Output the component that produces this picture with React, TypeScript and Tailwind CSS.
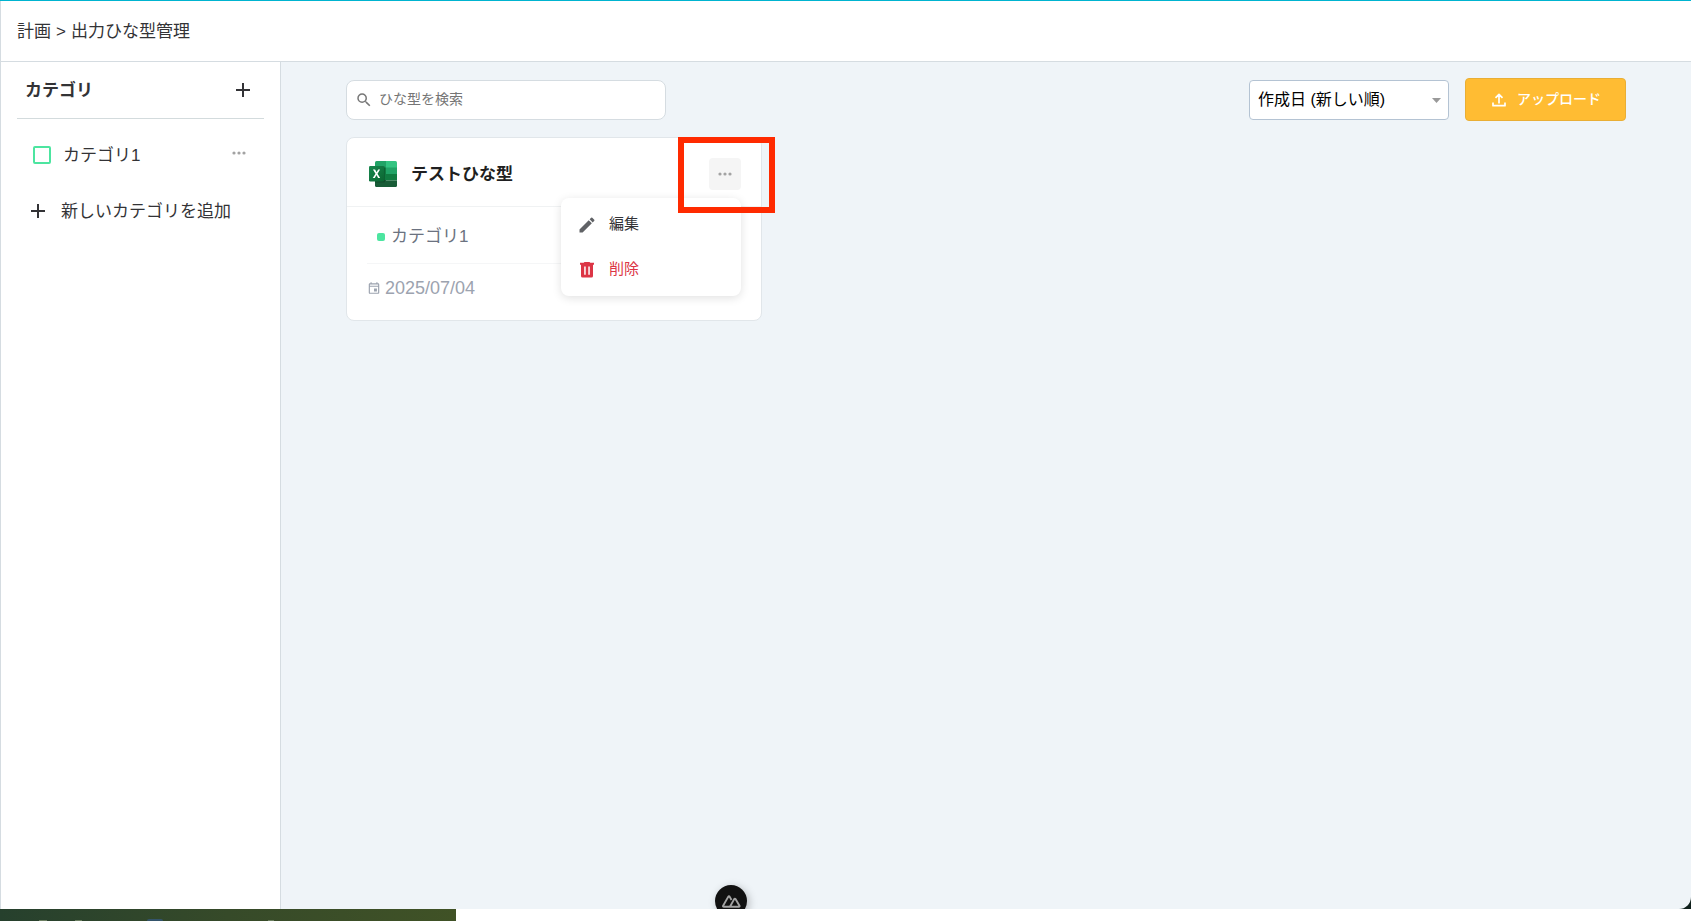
import React, { useState } from 'react';
import { MdEdit, MdOutlineEvent, MdSearch } from 'react-icons/md';

interface Template {
  id: number;
  name: string;
  category: string;
  createdAt: string;
}

const templates: Template[] = [
  { id: 1, name: 'テストひな型', category: 'カテゴリ1', createdAt: '2025/07/04' },
];

const PlusIcon: React.FC = () => (
  <svg width="14" height="14" viewBox="0 0 14 14" fill="#333336" aria-hidden="true">
    <path d="M6 0h2v6h6v2H8v6H6V8H0V6h6z" />
  </svg>
);

const DotsIcon: React.FC = () => (
  <svg width="14" height="4" viewBox="0 0 14 4" fill="#a3a3a3" aria-hidden="true">
    <circle cx="2" cy="2" r="1.6" />
    <circle cx="7" cy="2" r="1.6" />
    <circle cx="12" cy="2" r="1.6" />
  </svg>
);

const UploadIcon: React.FC = () => (
  <svg
    width="14"
    height="14"
    viewBox="0 0 14 14"
    fill="none"
    stroke="#fff"
    strokeWidth="1.7"
    strokeLinejoin="round"
    aria-hidden="true"
  >
    <path d="M7 10.500V1.5M3.5 4.8L7 1.3l3.5 3.5M1 9.500v3.2h12V9.500" />
  </svg>
);

const TrashIcon: React.FC = () => (
  <svg width="14" height="16" viewBox="0 0 14 16" aria-hidden="true">
    <path fill="#dc3545" d="M4.5 0h5l.8.8H14v2h-1V14a1.5 1.5 0 0 1-1.5 1.5h-9A1.5 1.5 0 0 1 1 14V2.8H0v-2h3.7z" />
    <path fill="#fff" d="M4.2 4.5h1.5v8.2H4.2zM8.3 4.5h1.5v8.2H8.3z" />
  </svg>
);

const ExcelIcon: React.FC = () => (
  <svg width="28" height="26" viewBox="0 0 28 26" aria-hidden="true">
    <defs>
      <clipPath id="sheet">
        <rect x="6" y="0" width="22" height="26" rx="1.5" />
      </clipPath>
      <linearGradient id="badge" x1="0" y1="0" x2="1" y2="1">
        <stop offset="0" stopColor="#18884f" />
        <stop offset="1" stopColor="#0b6631" />
      </linearGradient>
    </defs>
    <g clipPath="url(#sheet)">
      <path fill="#21a366" d="M6 0h11v7H6z" />
      <path fill="#33c481" d="M17 0h11v7H17z" />
      <path fill="#21a366" d="M6 6.5h22V13H6z" />
      <path fill="#107c41" d="M17 13h11v6.5H17z" />
      <path fill="#185c37" d="M6 13h11v6.5h11V26H6z" />
      <path fill="#107c41" d="M6 6.5h11V19H6z" />
      <path fill="#000" opacity=".2" d="M6 5h8.5c1 0 1.5.5 1.5 1.5V20c0 1-.5 1.5-1.5 1.5H6z" />
    </g>
    <rect y="5" width="15" height="15.5" rx="1.3" fill="url(#badge)" />
    <path fill="#fff" d="M3.7 17l2.8-4.3-2.6-4.2h2.2l1.5 2.8 1.5-2.8h2l-2.6 4.2 2.7 4.3H9.1l-1.6-3-1.7 3z" />
  </svg>
);

const NuxtIcon: React.FC = () => (
  <svg
    width="19"
    height="13"
    viewBox="0 0 19 13"
    fill="none"
    stroke="#a3a3a3"
    strokeWidth="1.9"
    strokeLinejoin="round"
    aria-hidden="true"
  >
    <path d="M8.5 11.8H1.8c-.7 0-1-.6-.7-1.1L6.3 1.6c.3-.5 1-.5 1.3 0L9.5 5M8.5 11.8h8.300c.7 0 1-.6.7-1.1l-4-6.6c-.3-.5-1-.5-1.3 0L8.5 10.7c-.3.5-.6 1.1-1.5 1.1" />
  </svg>
);

const Sidebar: React.FC = () => {
  const [checked, setChecked] = useState(false);

  return (
    <aside className="w-[280px] shrink-0 border-r border-[#d5dce1] bg-white px-4">
      <div className="flex h-[57px] items-center justify-between border-b border-[#d3dbdd] pr-3.5 pl-2">
        <h2 className="pt-0.5 text-[17px] leading-6 font-bold text-[#333336]">カテゴリ</h2>
        <button type="button" aria-label="カテゴリを追加">
          <PlusIcon />
        </button>
      </div>
      <div className="mt-2 flex h-14 items-center justify-between pr-[18px] pl-4">
        <label className="flex items-center gap-3 text-[17px] leading-6 text-[#333336]">
          <input
            type="checkbox"
            checked={checked}
            onChange={(e) => setChecked(e.target.checked)}
            className="size-[18px] appearance-none rounded-xs border-2 border-[#4ce5a0] checked:bg-[#4ce5a0]"
          />
          <span className="pt-0.5">カテゴリ1</span>
        </label>
        <button type="button" aria-label="カテゴリのメニュー" className="pb-1">
          <DotsIcon />
        </button>
      </div>
      <button
        type="button"
        className="flex h-14 w-full items-center gap-4 pl-3.5 text-[17px] leading-6 text-[#333336]"
      >
        <PlusIcon />
        <span className="pt-0.5">新しいカテゴリを追加</span>
      </button>
    </aside>
  );
};

const Toolbar: React.FC = () => (
  <div className="flex items-center justify-between">
    <label className="flex h-10 w-80 items-center gap-1.5 rounded-lg border border-[#d5dce1] bg-white px-2">
      <MdSearch size={18} color="#777" aria-hidden="true" />
      <input
        type="search"
        aria-label="ひな型を検索"
        placeholder="ひな型を検索"
        className="min-w-0 flex-1 pb-0.5 text-sm outline-none placeholder:text-[#757575]"
      />
    </label>
    <div className="flex items-center gap-4">
      <div className="relative">
        <select
          aria-label="並び順"
          className="h-10 w-[200px] appearance-none rounded-sm border border-[#b4c3d3] bg-white px-2 text-base text-black"
        >
          <option>作成日 (新しい順)</option>
          <option>作成日 (古い順)</option>
        </select>
        <svg className="pointer-events-none absolute top-[18px] right-2" width="9" height="5" aria-hidden="true">
          <path d="M0 0h9L4.5 5z" fill="#999" />
        </svg>
      </div>
      <button
        type="button"
        className="flex h-[43px] w-[161px] items-center justify-center gap-[11px] rounded-sm border border-[#e9ae35] bg-[#ffbc33] pl-0.5 text-sm font-medium text-white"
      >
        <UploadIcon />
        <span className="pb-0.5">アップロード</span>
      </button>
    </div>
  </div>
);

const TemplateCard: React.FC<{ template: Template }> = ({ template }) => {
  const [open, setOpen] = useState(true);

  return (
    <article className="relative rounded-lg border border-[#e1e6ea] bg-white pb-2">
      <div className="flex items-center justify-between border-b border-[#f0f2f3] px-5 pt-5 pb-4">
        <div className="flex items-center gap-3.5 pl-0.5">
          <ExcelIcon />
          <h3 className="pt-0.5 text-[17px] leading-6 font-bold text-[#1f1f21]">{template.name}</h3>
        </div>
        <button
          type="button"
          aria-label="ひな型のメニュー"
          aria-expanded={open}
          onClick={() => setOpen(!open)}
          className="flex size-8 items-center justify-center rounded-sm bg-[#f5f5f5]"
        >
          <DotsIcon />
        </button>
      </div>
      <div className="mx-5 flex h-[57px] items-center gap-1.5 border-b border-[#f5f6f7] pt-1 pl-2.5 text-[17px] text-[#6b7280]">
        <span className="size-2 rounded-xs bg-[#4ce5a0]" />
        {template.category}
      </div>
      <div className="mx-5 flex h-12 items-center gap-1 text-lg text-[#9ca3af]">
        <MdOutlineEvent size={14} aria-hidden="true" />
        <time>{template.createdAt}</time>
      </div>

      {open && (
        <div className="absolute top-[60px] right-5 w-[180px] rounded-lg bg-white py-1 shadow-[0_2px_10px_rgba(0,0,0,0.12)]">
          <button type="button" className="flex h-[45px] w-full items-center gap-3 px-4 text-[15px] text-[#333336]">
            <MdEdit size={20} color="#606266" aria-hidden="true" />
            編集
          </button>
          <button type="button" className="flex h-[45px] w-full items-center gap-3 px-4 text-[15px] text-[#dc3545]">
            <span className="flex w-5 justify-center">
              <TrashIcon />
            </span>
            削除
          </button>
        </div>
      )}
      <div className="pointer-events-none absolute -top-px -right-[14px] h-[76px] w-[97px] border-6 border-[#ff2a00]" />
    </article>
  );
};

const App: React.FC = () => {
  return (
    <div className="flex min-h-screen flex-col bg-white font-['Liberation_Sans','Noto_Sans_CJK_JP',sans-serif]">
      <div className="flex flex-1 flex-col border-t border-[#00b4d0] bg-[#10201c]">
        <div className="flex flex-1 flex-col overflow-hidden rounded-br-xl border-l border-[#d5dce1] bg-[#eff4f8]">
          <header className="flex h-[61px] items-center border-b border-[#d5dce1] bg-white px-4">
            <nav aria-label="パンくず" className="flex gap-[5px] pt-0.5 text-[17px] leading-6 text-[#333336]">
              <a href="#plan">計画</a>
              <span>&gt;</span>
              <a href="#templates">出力ひな型管理</a>
            </nav>
          </header>
          <div className="relative flex flex-1">
            <Sidebar />
            <main className="flex-1 px-8 py-4">
              <div className="mx-auto flex max-w-[1280px] flex-col gap-4">
                <Toolbar />
                <div className="grid grid-cols-3 gap-4">
                  {templates.map((template) => (
                    <TemplateCard key={template.id} template={template} />
                  ))}
                </div>
              </div>
            </main>
            <button
              type="button"
              aria-label="開発ツール"
              className="absolute -bottom-2 left-[714px] flex size-8 items-center justify-center rounded-full bg-[#111] shadow-[2px_2px_8px_rgba(0,0,0,0.25)]"
            >
              <NuxtIcon />
            </button>
          </div>
        </div>
      </div>
      <div className="h-3 w-[456px] bg-linear-to-r from-[#26402d] via-[#364a29] to-[#405226]">
        <svg width="456" height="12" aria-hidden="true">
          <rect x="147" y="10" width="16" height="4" rx="2" fill="#34546b" />
          <path d="M39 11.5h8M75 11.5h7M268 11.5h6" stroke="#6d8062" />
        </svg>
      </div>
    </div>
  );
};

export default App;
